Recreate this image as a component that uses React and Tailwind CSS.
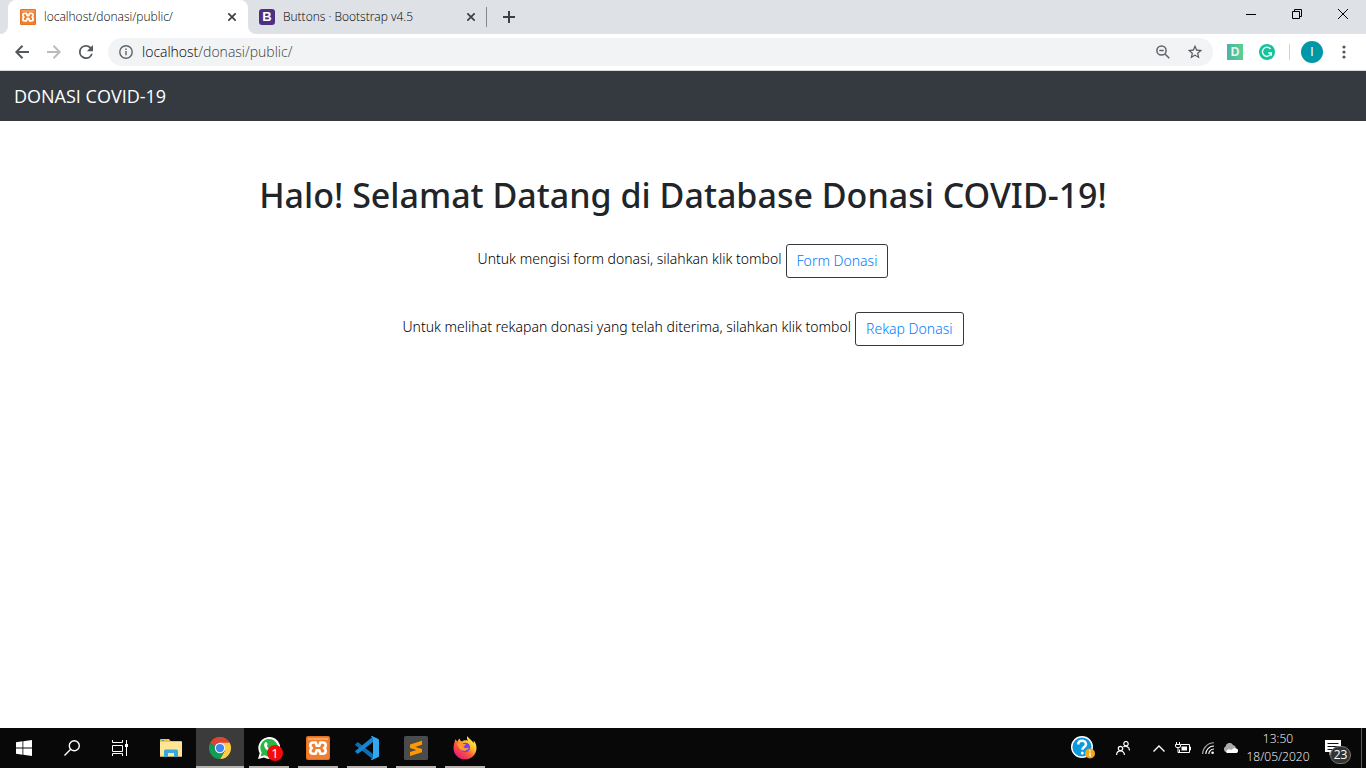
import React from 'react';

function XamppIcon({ className, radius = 2 }) {
  return (
    <svg className={className} viewBox="0 0 24 24" aria-hidden="true">
      <rect width="24" height="24" rx={radius} fill="#e4701e" />
      <rect x="1" y="1" width="22" height="22" rx={radius} fill="#f0802f" />
      <path d="M2 2h20v2H2z" fill="#f7a566" />
      <path
        d="M12 9.800H10.800L9.700 6.500H7.300Q4.300 6.500 4.300 9T6 12Q4.300 12.700 4.300 15.200T7.300 17.700h2.400L10.800 14.200h2.400l1.100 3.500h2.400q3 0 3-2.500T18 12Q19.700 11.500 19.700 9T16.700 6.500h-2.400L13.200 9.800z"
        fill="none"
        stroke="#fff"
        strokeWidth="2.600"
        strokeLinejoin="round"
      />
    </svg>
  );
}

function CloseGlyph() {
  return (
    <svg className="size-2" viewBox="0 0 8 8" fill="none" stroke="#3c4043" strokeWidth="1.700" aria-hidden="true">
      <path d="M0.300 0.300l7.400 7.400M7.700 0.300L0.300 7.700" />
    </svg>
  );
}

function TabStrip() {
  return (
    <div className="flex h-[34px] items-stretch bg-[#dee1e6] pl-2">
      <div className="relative flex w-[240px] shrink-0 items-center rounded-t-lg bg-white pr-2 pl-3">
        <svg className="absolute bottom-0 -left-2 size-2" viewBox="0 0 8 8" aria-hidden="true">
          <path d="M8 0v8H0a8 8 0 0 0 8-8z" fill="#fff" />
        </svg>
        <svg className="absolute -right-2 bottom-0 size-2" viewBox="0 0 8 8" aria-hidden="true">
          <path d="M0 0v8h8a8 8 0 0 1-8-8z" fill="#fff" />
        </svg>
        <XamppIcon className="size-4 shrink-0" />
        <span className="ml-2 flex-1 truncate text-[12px] font-light text-black">localhost/donasi/public/</span>
        <button type="button" aria-label="Close tab" className="flex size-4 shrink-0 items-center justify-center">
          <CloseGlyph />
        </button>
      </div>
      <div className="flex w-[238px] shrink-0 items-center pl-[11px] pr-[7px]">
        <span className="flex size-4 shrink-0 items-center justify-center rounded-[3px] bg-[#4f2f7f] font-['Liberation_Sans'] text-[13px] leading-4 font-bold text-white">
          B
        </span>
        <span className="ml-2 flex-1 truncate text-[12px] font-light text-black">Buttons · Bootstrap v4.5</span>
        <button type="button" aria-label="Close tab" className="flex size-4 shrink-0 items-center justify-center">
          <CloseGlyph />
        </button>
      </div>
      <div className="my-[7px] w-px bg-[#85888c]" />
      <button type="button" aria-label="New tab" className="flex w-11 items-center justify-center">
        <svg className="size-3" viewBox="0 0 12 12" stroke="#3c4043" strokeWidth="2" aria-hidden="true">
          <path d="M6 0v12M0 6h12" />
        </svg>
      </button>
      <div className="ml-auto flex h-7">
        <button type="button" aria-label="Minimize" className="flex w-[46px] items-center justify-center">
          <svg className="size-[10px]" viewBox="0 0 10 10" stroke="#000" aria-hidden="true">
            <path d="M0 5.500h10" />
          </svg>
        </button>
        <button type="button" aria-label="Restore" className="flex w-[46px] items-center justify-center">
          <svg className="size-[10px]" viewBox="0 0 10 10" fill="none" stroke="#000" aria-hidden="true">
            <path d="M0.500 2.500h7v7h-7zM2.500 2.500v-2h7v7h-2" />
          </svg>
        </button>
        <button type="button" aria-label="Close window" className="flex w-[46px] items-center justify-center">
          <svg className="size-[10px]" viewBox="0 0 10 10" stroke="#000" aria-hidden="true">
            <path d="M0 0l10 10M10 0L0 10" />
          </svg>
        </button>
      </div>
    </div>
  );
}

function ToolButton({ label, children }) {
  return (
    <button type="button" aria-label={label} className="flex size-8 shrink-0 items-center justify-center">
      {children}
    </button>
  );
}

function Toolbar() {
  return (
    <div className="flex h-[37px] items-center border-b border-[#d5d8dc] bg-white pl-[6px] pr-[14px]">
      <ToolButton label="Back">
        <svg className="size-[14px]" viewBox="0 0 14 14" fill="none" stroke="#54585d" strokeWidth="2" aria-hidden="true">
          <path d="M14 7H2M7.500 0.800L1.300 7l6.200 6.200" />
        </svg>
      </ToolButton>
      <ToolButton label="Forward">
        <svg className="size-[14px]" viewBox="0 0 14 14" fill="none" stroke="#b9bbbe" strokeWidth="2" aria-hidden="true">
          <path d="M0 7h12M6.500 0.800L12.700 7l-6.200 6.200" />
        </svg>
      </ToolButton>
      <ToolButton label="Reload">
        <svg className="size-[14px]" viewBox="4 4 16 16" fill="#54585d" aria-hidden="true">
          <path d="M17.650 6.350A7.960 7.960 0 0 0 12 4a8 8 0 1 0 7.730 10h-2.080A6 6 0 1 1 12 6c1.660 0 3.140.690 4.220 1.780L13 11h7V4z" />
        </svg>
      </ToolButton>
      <div className="ml-[6px] flex h-7 flex-1 items-center rounded-full bg-[#f1f3f4] pr-[10px] pl-[11px]">
        <svg className="size-[14px] shrink-0" viewBox="0 0 14 14" aria-hidden="true">
          <circle cx="7" cy="7" r="6.200" fill="none" stroke="#5f6368" strokeWidth="1.400" />
          <path d="M6.300 6h1.400v4.300H6.300zM6.300 3.500h1.400v1.400H6.300z" fill="#5f6368" />
        </svg>
        <span className="relative ml-[9px] flex-1 text-[14px] leading-5 font-light">
          <span aria-hidden="true">
            <span className="text-black">localhost</span>
            <span className="text-[#3a3d41]">/donasi/public/</span>
          </span>
          <input
            type="text"
            aria-label="Address"
            className="absolute inset-0 w-full bg-transparent text-transparent outline-none"
          />
        </span>
        <button type="button" aria-label="Zoom" className="flex w-4 shrink-0 justify-center">
          <svg className="size-[14px]" viewBox="0 0 14 14" fill="none" stroke="#5f6368" strokeWidth="1.500" aria-hidden="true">
            <circle cx="5.500" cy="5.500" r="4.600" />
            <path d="M9 9l4.300 4.300M3.300 5.500h4.400" />
          </svg>
        </button>
        <button type="button" aria-label="Bookmark" className="ml-4 flex w-4 shrink-0 justify-center">
          <svg className="size-4" viewBox="1 1 22 22" fill="#54585d" aria-hidden="true">
            <path d="M22 9.240l-7.190-.620L12 2 9.190 8.630 2 9.240l5.460 4.730L5.820 21 12 17.270 18.180 21l-1.630-7.030L22 9.240zM12 15.400l-3.760 2.270 1-4.280-3.320-2.880 4.380-.380L12 6.100l1.710 4.040 4.380.380-3.320 2.880 1 4.280L12 15.400z" />
          </svg>
        </button>
      </div>
      <button
        type="button"
        className="ml-[14px] size-4 shrink-0 bg-linear-to-r from-[#4cb3a7] to-[#5bd08f] font-['Liberation_Sans'] text-[12px] leading-4 font-bold text-[#e8f8f1]"
      >
        D
      </button>
      <button type="button" aria-label="Grammarly" className="ml-4 size-4 shrink-0">
        <svg className="size-4" viewBox="0 0 16 16" aria-hidden="true">
          <circle cx="8" cy="8" r="8" fill="#15c39a" />
          <path d="M11.500 5A4.500 4.500 0 1 0 12.300 9H9.200M12.300 9v2.800" fill="none" stroke="#e9fff8" strokeWidth="1.400" />
        </svg>
      </button>
      <div className="ml-[14px] h-4 w-px bg-[#cfd1d4]" />
      <button
        type="button"
        className="ml-[11px] size-[22px] shrink-0 rounded-full bg-[#0097a7] font-['Liberation_Sans'] text-[12px] leading-[22px] text-white"
      >
        I
      </button>
      <button type="button" aria-label="Menu" className="ml-[13px] flex w-4 shrink-0 justify-center">
        <svg className="h-[14px] w-1" viewBox="0 0 4 14" fill="#54585d" aria-hidden="true">
          <circle cx="2" cy="2" r="1.600" />
          <circle cx="2" cy="7" r="1.600" />
          <circle cx="2" cy="12" r="1.600" />
        </svg>
      </button>
    </div>
  );
}

function Page() {
  return (
    <main className="flex-1 bg-white text-[#212529]">
      <nav className="flex h-[50px] items-center bg-[#343a40] px-[14px]">
        <a href="#home" className="text-[18px] leading-7 text-white">
          DONASI COVID-19
        </a>
      </nav>
      <div className="px-4 pt-[51px] text-center font-['Noto_Sans',sans-serif]">
        <h1 className="text-[34px] leading-[46px] font-medium">Halo! Selamat Datang di Database Donasi COVID-19!</h1>
        <div className="mt-[26px] flex items-start justify-center gap-1 text-[14px] font-light">
          <p className="leading-[30px] text-black">Untuk mengisi form donasi, silahkan klik tombol</p>
          <a href="#form" className="rounded-[3px] border border-[#343a40] px-[10px] leading-8 text-[#007bff]">
            Form Donasi
          </a>
        </div>
        <div className="mt-[34px] flex items-start justify-center gap-1 text-[14px] font-light">
          <p className="leading-[30px] text-black">Untuk melihat rekapan donasi yang telah diterima, silahkan klik tombol</p>
          <a href="#rekap" className="rounded-[3px] border border-[#343a40] px-[10px] leading-8 text-[#007bff]">
            Rekap Donasi
          </a>
        </div>
      </div>
    </main>
  );
}

function SystemButton({ label, children }) {
  return (
    <button type="button" aria-label={label} className="flex w-12 items-center justify-center">
      {children}
    </button>
  );
}

function AppButton({ label, open, active, children }) {
  return (
    <button
      type="button"
      aria-label={label}
      className={
        active
          ? 'flex w-12 flex-col items-center bg-[#3b3b3b]'
          : 'flex w-12 flex-col items-center'
      }
    >
      <span className="flex flex-1 items-center pt-[2px]">{children}</span>
      <span
        className={
          active ? 'h-[2px] w-full bg-[#b5b2af]' : open ? 'h-[2px] w-10 bg-[#b5b2af]' : 'h-[2px] w-10'
        }
      />
    </button>
  );
}

function Taskbar() {
  return (
    <footer className="flex h-10 items-stretch bg-[#080808] text-white">
      <SystemButton label="Start">
        <svg className="size-4" viewBox="0 0 16 16" fill="#fff" aria-hidden="true">
          <path d="M0 2.200l6.500-.900v6.200H0zM7.300 1.200L16 0v7.500H7.300zM0 8.400h6.500v6.300L0 13.800zM7.300 8.400H16V16l-8.700-1.200z" />
        </svg>
      </SystemButton>
      <SystemButton label="Search">
        <svg className="size-4" viewBox="0 0 16 16" fill="none" stroke="#fff" strokeWidth="1.400" aria-hidden="true">
          <circle cx="10.300" cy="5.700" r="5" />
          <path d="M6.700 9.300L0.500 15.500" />
        </svg>
      </SystemButton>
      <SystemButton label="Task view">
        <svg className="size-4" viewBox="0 0 16 16" fill="none" stroke="#fff" aria-hidden="true">
          <path d="M0.500 0v2.500h10V0M0.500 16v-2.500h10V16M0.500 5.500h10v6h-10zM14.500 0v16" />
          <path d="M13 4h3v3h-3z" fill="#fff" stroke="none" />
        </svg>
      </SystemButton>
      <div className="ml-[3px] flex gap-px">
        <AppButton label="File Explorer">
          <svg className="h-[19px] w-[22px]" viewBox="0 0 22 19" aria-hidden="true">
            <path d="M0 1q0-1 1-1h8l1.500 2H21q1 0 1 1v14.500H0z" fill="#f5c043" />
            <path d="M1.500 1h2.500v1H1.500z" fill="#31a9dd" />
            <path d="M0 3h22v14.500H0z" fill="#ffe594" />
            <path d="M4 18v-6q0-1.500 1.500-1.500h11Q18 10.500 18 12v6h-4v-4H8v4z" fill="#35a8e0" />
          </svg>
        </AppButton>
        <AppButton label="Chrome" active>
          <svg className="size-[22px]" viewBox="0 0 48 48" aria-hidden="true">
            <path d="M24 24L3.200 12A24 24 0 0 1 44.800 12z" fill="#db4437" />
            <path d="M24 24V12h20.800A24 24 0 0 1 24 48l10.400-18z" fill="#ffcd40" />
            <path d="M34.400 30L24 48A24 24 0 0 1 3.200 12L13.600 30H24z" fill="#0f9d58" />
            <path d="M3.200 12L13.600 30 24 24V12z" fill="#0f9d58" />
            <path d="M3.200 12A24 24 0 0 1 44.800 12H24a12 12 0 0 0-11.500 8.500z" fill="#db4437" />
            <circle cx="24" cy="24" r="11.500" fill="#f1f1f1" />
            <circle cx="24" cy="24" r="9" fill="#4285f4" />
          </svg>
        </AppButton>
        <AppButton label="WhatsApp" open>
          <span className="relative block size-[22px]">
            <svg className="size-[22px]" viewBox="0 0 22 22" aria-hidden="true">
              <path d="M0 22l1.700-5.700A11 11 0 1 1 6 20.600z" fill="#fff" />
              <path d="M2.500 19.500l1.200-4A8.800 8.800 0 1 1 6.600 18.300z" fill="#28b846" />
              <path
                d="M7.300 5.300c.600-.500 1.300-.400 1.500.200l.800 1.800c.200.500-.900 1.300-.700 1.700 1 1.900 2.400 3.100 4.200 3.900.500.200 1.200-1.200 1.700-1l2 1c.600.300-.100 2-1.100 2.500-4 1.500-9.500-3.500-9.600-7.300 0-1 .500-2.200 1.200-2.800z"
                fill="#fff"
              />
            </svg>
            <span className="absolute top-2 left-[9px] size-4 rounded-full bg-[#f20d0d] text-center text-[13px] leading-4">
              1
            </span>
          </span>
        </AppButton>
        <AppButton label="XAMPP" open>
          <XamppIcon className="size-6" />
        </AppButton>
        <AppButton label="Visual Studio Code" open>
          <svg className="size-6" viewBox="0 0 24 24" aria-hidden="true">
            <path d="M0.500 8l1.700-1.500q.600-.400 1.200 0L18 18v5.500L0.500 9.200q-.700-.600 0-1.200z" fill="#0b6eb5" />
            <path d="M0.500 16l1.700 1.500q.600.400 1.200 0L18 6V0.500L0.500 14.800q-.700.600 0 1.200z" fill="#1585cf" />
            <path d="M17 0l6 2.800q1 .500 1 1.500v15.400q0 1-1 1.500L17 24q-.800 0-1.200-.700L18 22V2l-2.200-1.300Q16.200 0 17 0z" fill="#32a8ee" />
          </svg>
        </AppButton>
        <AppButton label="Sublime Text" open>
          <svg className="size-6" viewBox="0 0 24 24" aria-hidden="true">
            <rect width="24" height="24" rx="1.500" fill="#4b4b4b" />
            <path d="M6 8.600l12-3.900v4.100l-6.800 2.200 6.800 2v3.300L6 20.100V16l6.500-2.100L6 12z" fill="#ff9800" />
          </svg>
        </AppButton>
        <AppButton label="Firefox" open>
          <svg className="size-6" viewBox="0 0 24 24" aria-hidden="true">
            <defs>
              <linearGradient id="fox" x1="0.850" y1="0.100" x2="0.200" y2="0.950">
                <stop offset="0" stopColor="#fff44f" />
                <stop offset="0.350" stopColor="#ffb52c" />
                <stop offset="0.600" stopColor="#ff5a36" />
                <stop offset="1" stopColor="#e31587" />
              </linearGradient>
            </defs>
            <path
              d="M14.500 0c-1 2-.500 3.500.700 4.800C13 4 10.500 4.200 9 5.400 7.500 5 6.800 3.500 6.700 2.500 5.500 3.200 4.800 4.500 4.500 5.800L2.300 3.200C2 5.500.500 8 .500 12.300A11.500 11.200 0 0 0 23.500 12c0-3-1-5.500-3-7.500l.300 2.700C18.500 3.500 15.500 3 14.500 0z"
              fill="url(#fox)"
            />
            <circle cx="12.300" cy="11.500" r="4.800" fill="#7542e5" />
            <path d="M4 8c2-1.500 5-1 6.500 0l2.500.300c0 1.400-2.500 1.500-2.500 2.500 1 2 4 1.500 5.500.500-.500 3-5 5-8 2.500C6.500 13 5 10.500 4 8z" fill="#ff9a2b" />
          </svg>
        </AppButton>
      </div>
      <div className="ml-auto flex items-center">
        <button type="button" aria-label="Help" className="relative size-6">
          <svg className="size-6" viewBox="0 0 24 24" aria-hidden="true">
            <circle cx="11" cy="11" r="10.300" fill="#0c98da" stroke="#fff" strokeWidth="1.400" />
            <path d="M7.300 8.500c0-5 7.700-4.700 7.700-.300 0 2.800-3.600 2.800-3.600 5.600" fill="none" stroke="#fff" strokeWidth="2.500" />
            <circle cx="11.300" cy="17" r="1.500" fill="#fff" />
            <circle cx="19" cy="17.500" r="5" fill="#f6a81c" />
            <path d="M18.300 16.500h1.400v4h-1.400zM18.300 14.300h1.400v1.300h-1.400z" fill="#fff" />
          </svg>
        </button>
        <button type="button" aria-label="People" className="ml-[21px]">
          <svg className="size-[14px]" viewBox="0 0 14 14" fill="none" stroke="#fff" strokeWidth="1.200" aria-hidden="true">
            <circle cx="4.500" cy="7.500" r="2.200" />
            <path d="M0.600 14c0-5.500 7.800-5.500 7.800 0" />
            <circle cx="10" cy="2.700" r="2.200" />
            <path d="M7.500 6c2-2 6 0 6 3.500" />
          </svg>
        </button>
        <button type="button" aria-label="Hidden icons" className="ml-[23px]">
          <svg className="h-[7px] w-3" viewBox="0 0 12 7" fill="none" stroke="#fff" strokeWidth="1.400" aria-hidden="true">
            <path d="M0.500 6.500L6 1l5.500 5.500" />
          </svg>
        </button>
        <button type="button" aria-label="Battery" className="ml-[10px]">
          <svg className="h-3 w-4" viewBox="0 0 16 12" fill="none" stroke="#fff" aria-hidden="true">
            <path d="M6 2.500h8.500v8h-10V7.500M14.500 5h1v3h-1M1.500 0v2M4.500 0v2M3 5.500v5h2" />
            <path d="M0.500 2.500h5V4Q5.500 5.500 4 5.500H2Q0.500 5.500 0.500 4z" />
            <path d="M6.500 4.500H12v4H6.500z" fill="#fff" stroke="none" />
          </svg>
        </button>
        <button type="button" aria-label="Wi-Fi" className="ml-[11px]">
          <svg className="size-3" viewBox="0 0 12 12" fill="none" stroke="#fff" strokeWidth="1.100" aria-hidden="true">
            <path d="M0.600 12A11.400 11.400 0 0 1 12 0.800" stroke="#aaa" />
            <path d="M3.800 12A8.200 8.200 0 0 1 12 4M6.800 12A5.200 5.200 0 0 1 12 7" />
            <circle cx="10.600" cy="10.700" r="1.300" fill="#fff" stroke="none" />
          </svg>
        </button>
        <button type="button" aria-label="OneDrive" className="ml-[9px]">
          <svg className="h-[10px] w-4" viewBox="0 0 16 10" aria-hidden="true">
            <path d="M3 9a3 3 0 0 1-.500-5.500A4 4 0 0 1 10 2a4 4 0 0 1 3 3L8 9z" fill="#aaa" />
            <path d="M3.500 10A2.500 2.500 0 0 1 4 7Q6.500 5.500 8.500 7a3.500 3.500 0 0 1 5-1.500A2.400 2.400 0 0 1 13.500 10z" fill="#fff" />
          </svg>
        </button>
        <div className="ml-[6px] w-[66px] text-center text-[12px] leading-[18px] font-light">
          <p>13:50</p>
          <p>18/05/2020</p>
        </div>
        <button type="button" aria-label="Notifications" className="relative ml-[14px] h-6 w-[27px]">
          <svg className="absolute top-1 left-0 size-4" viewBox="0 0 16 16" aria-hidden="true">
            <path d="M0 0h16v12H8l-3.500 3.500V12H0z" fill="#fff" />
            <path d="M2.500 3.500h11M2.500 6.500h11M2.500 9.500h6" stroke="#111" />
          </svg>
          <span className="absolute top-[10px] left-[5px] h-[18px] w-[21px] rounded-full border border-[#777] bg-[#333] text-center text-[12px] leading-4">
            23
          </span>
        </button>
        <div className="ml-[9px] h-10 w-px bg-[#5c5c5c]" />
        <div className="w-1" />
      </div>
    </footer>
  );
}

export default function App() {
  return (
    <div className="flex min-h-screen flex-col bg-white font-['Open_Sans','Noto_Sans',sans-serif]">
      <TabStrip />
      <Toolbar />
      <Page />
      <Taskbar />
    </div>
  );
}
